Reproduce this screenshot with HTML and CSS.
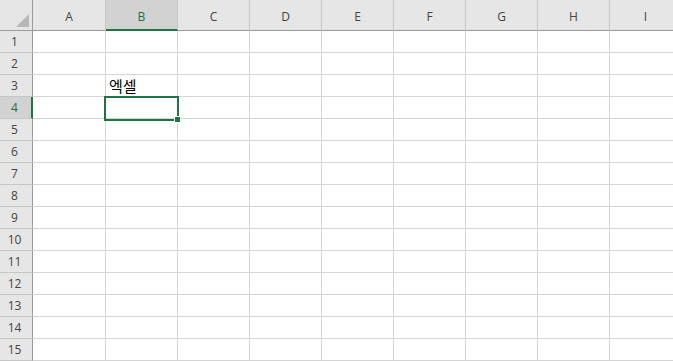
FILE: index.html
```html
<!DOCTYPE html>
<html lang="ko">
<head>
    <meta charset="UTF-8">
    <title>Sheet1</title>
    <link rel="stylesheet" href="styles.css">
</head>
<body>
<div class="sheet">
    <div class="corner"><span class="corner-tri"></span></div>
    <div class="col-head">A</div>
    <div class="col-head active">B</div>
    <div class="col-head">C</div>
    <div class="col-head">D</div>
    <div class="col-head">E</div>
    <div class="col-head">F</div>
    <div class="col-head">G</div>
    <div class="col-head">H</div>
    <div class="col-head">I</div>

    <div class="row-head">1</div><div class="cell"></div><div class="cell"></div><div class="cell"></div><div class="cell"></div><div class="cell"></div><div class="cell"></div><div class="cell"></div><div class="cell"></div><div class="cell"></div>
    <div class="row-head">2</div><div class="cell"></div><div class="cell"></div><div class="cell"></div><div class="cell"></div><div class="cell"></div><div class="cell"></div><div class="cell"></div><div class="cell"></div><div class="cell"></div>
    <div class="row-head">3</div><div class="cell"></div><div class="cell text">엑셀</div><div class="cell"></div><div class="cell"></div><div class="cell"></div><div class="cell"></div><div class="cell"></div><div class="cell"></div><div class="cell"></div>
    <div class="row-head active">4</div><div class="cell"></div><div class="cell"></div><div class="cell"></div><div class="cell"></div><div class="cell"></div><div class="cell"></div><div class="cell"></div><div class="cell"></div><div class="cell"></div>
    <div class="row-head">5</div><div class="cell"></div><div class="cell"></div><div class="cell"></div><div class="cell"></div><div class="cell"></div><div class="cell"></div><div class="cell"></div><div class="cell"></div><div class="cell"></div>
    <div class="row-head">6</div><div class="cell"></div><div class="cell"></div><div class="cell"></div><div class="cell"></div><div class="cell"></div><div class="cell"></div><div class="cell"></div><div class="cell"></div><div class="cell"></div>
    <div class="row-head">7</div><div class="cell"></div><div class="cell"></div><div class="cell"></div><div class="cell"></div><div class="cell"></div><div class="cell"></div><div class="cell"></div><div class="cell"></div><div class="cell"></div>
    <div class="row-head">8</div><div class="cell"></div><div class="cell"></div><div class="cell"></div><div class="cell"></div><div class="cell"></div><div class="cell"></div><div class="cell"></div><div class="cell"></div><div class="cell"></div>
    <div class="row-head">9</div><div class="cell"></div><div class="cell"></div><div class="cell"></div><div class="cell"></div><div class="cell"></div><div class="cell"></div><div class="cell"></div><div class="cell"></div><div class="cell"></div>
    <div class="row-head">10</div><div class="cell"></div><div class="cell"></div><div class="cell"></div><div class="cell"></div><div class="cell"></div><div class="cell"></div><div class="cell"></div><div class="cell"></div><div class="cell"></div>
    <div class="row-head">11</div><div class="cell"></div><div class="cell"></div><div class="cell"></div><div class="cell"></div><div class="cell"></div><div class="cell"></div><div class="cell"></div><div class="cell"></div><div class="cell"></div>
    <div class="row-head">12</div><div class="cell"></div><div class="cell"></div><div class="cell"></div><div class="cell"></div><div class="cell"></div><div class="cell"></div><div class="cell"></div><div class="cell"></div><div class="cell"></div>
    <div class="row-head">13</div><div class="cell"></div><div class="cell"></div><div class="cell"></div><div class="cell"></div><div class="cell"></div><div class="cell"></div><div class="cell"></div><div class="cell"></div><div class="cell"></div>
    <div class="row-head">14</div><div class="cell"></div><div class="cell"></div><div class="cell"></div><div class="cell"></div><div class="cell"></div><div class="cell"></div><div class="cell"></div><div class="cell"></div><div class="cell"></div>
    <div class="row-head">15</div><div class="cell"></div><div class="cell"></div><div class="cell"></div><div class="cell"></div><div class="cell"></div><div class="cell"></div><div class="cell"></div><div class="cell"></div><div class="cell"></div>

    <!-- selected cell B4 -->
    <div class="selection"><span class="fill-handle"></span></div>
</div>
</body>
</html>
```

FILE: styles.css
```css
html, body {
    margin: 0;
    padding: 0;
    background-color: #ffffff;
    overflow: hidden;
}
.sheet {
    position: relative;
    display: grid;
    grid-template-columns: 33px 73px repeat(8, 72px);
    grid-template-rows: 31px repeat(15, 22px);
    font-family: "Open Sans", "Liberation Sans", sans-serif;
}
.corner {
    position: relative;
    background-color: #e6e6e6;
    border-right: 1px solid #9b9b9b;
    border-bottom: 1px solid #9b9b9b;
    box-sizing: border-box;
}
.corner-tri {
    position: absolute;
    right: 3px;
    bottom: 3px;
    width: 0;
    height: 0;
    border-left: 13px solid transparent;
    border-bottom: 13px solid #b7b7b7;
}
.col-head {
    background-color: #e6e6e6;
    color: #444;
    font-size: 12px;
    display: flex;
    align-items: flex-end;
    justify-content: center;
    padding-bottom: 5px;
    border-right: 1px solid #c6c6c6;
    border-bottom: 1px solid #9b9b9b;
    box-sizing: border-box;
}
.col-head.active {
    background-color: #d2d2d2;
    color: #217346;
    border-bottom: 2px solid #217346;
    padding-bottom: 4px;
}
.row-head {
    background-color: #e6e6e6;
    color: #444;
    font-size: 12px;
    display: flex;
    align-items: center;
    justify-content: center;
    padding-right: 3px;
    border-right: 1px solid #9b9b9b;
    border-bottom: 1px solid #c6c6c6;
    box-sizing: border-box;
}
.row-head.active {
    background-color: #d2d2d2;
    color: #217346;
    border-right: 2px solid #217346;
    padding-right: 2px;
}
.cell {
    border-right: 1px solid #d4d4d4;
    border-bottom: 1px solid #d4d4d4;
    box-sizing: border-box;
}
.cell.text {
    font-family: "Noto Sans CJK KR", "Noto Sans", sans-serif;
    font-size: 15px;
    line-height: 19px;
    color: #000;
    display: flex;
    align-items: flex-end;
    padding-left: 3px;
    padding-bottom: 1px;
}
.selection {
    position: absolute;
    left: 104px;
    top: 96px;
    width: 75px;
    height: 25px;
    border: 2px solid #217346;
    box-sizing: border-box;
    pointer-events: none;
}
.fill-handle {
    position: absolute;
    right: -4px;
    bottom: -4px;
    width: 5px;
    height: 5px;
    background-color: #217346;
    border: 1px solid #fff;
}
```
